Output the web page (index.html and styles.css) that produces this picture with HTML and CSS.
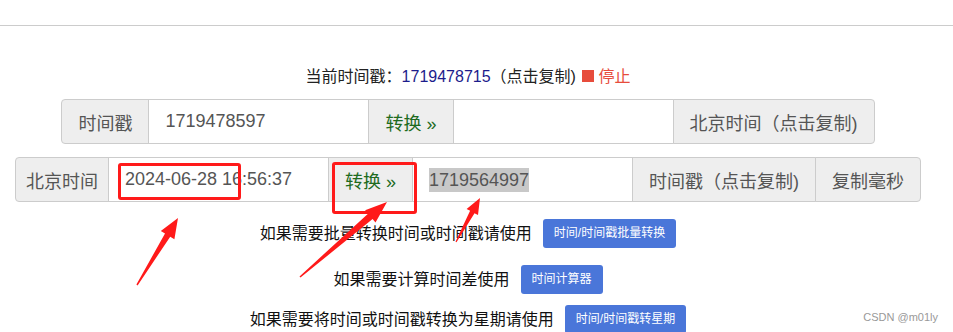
FILE: index.html
```html
<!DOCTYPE html>
<html lang="zh-CN">
<head>
    <meta charset="UTF-8">
    <meta name="viewport" content="width=device-width, initial-scale=1.0">
    <title>时间戳转换</title>
    <link rel="stylesheet" href="styles.css">
</head>
<body>
    <div class="topbar"></div>

    <div class="page">
        <p class="now">当前时间戳：<span class="now-value">1719478715</span>（点击复制)<span class="stop-box"></span> <span class="stop">停止</span></p>

        <div class="group">
            <span class="addon">时间戳</span>
            <div class="field">1719478597</div>
            <span class="btn">转换 »</span>
            <div class="field"></div>
            <span class="addon">北京时间（点击复制)</span>
        </div>

        <div class="group group-second">
            <span class="addon addon-narrow">北京时间</span>
            <div class="field">2024-06-28 16:56:37</div>
            <span class="btn">转换 »</span>
            <div class="field"><span class="picked">1719564997</span></div>
            <span class="addon">时间戳（点击复制)</span>
            <span class="addon">复制毫秒</span>
        </div>

        <p class="tip tip-batch">如果需要批量转换时间或时间戳请使用<a href="#" class="link-btn">时间/时间戳批量转换</a></p>
        <p class="tip tip-diff">如果需要计算时间差使用<a href="#" class="link-btn">时间计算器</a></p>
        <p class="tip tip-week">如果需要将时间或时间戳转换为星期请使用<a href="#" class="link-btn">时间/时间戳转星期</a></p>
    </div>

    <!-- screenshot annotations -->
    <div class="mark mark-date"></div>
    <div class="mark mark-btn"></div>
    <svg class="arrows" width="953" height="332" viewBox="0 0 953 332">
        <polygon points="137.6,285.4 170.2,236.7 174.4,239.3 178,218 160.8,230.9 165.0,233.5 136.4,284.6"/>
        <polygon points="300.5,277.6 372.6,219.0 375.5,222.5 387,202 365.1,210.3 368.0,213.8 299.5,276.4"/>
        <polygon points="456.5,242.3 474.5,213.2 478.0,215.1 480,198 466.6,208.9 470.1,210.8 455.5,241.7"/>
    </svg>
    <div class="watermark">CSDN @m01ly</div>
</body>
</html>
```

FILE: styles.css
```css
body {
    margin: 0;
    font-family: "Liberation Sans", "Noto Sans CJK SC", sans-serif;
    color: #333;
    background: #fff;
}
.topbar {
    height: 25px;
    border-bottom: 1px solid #ccc;
}
.page {
    width: 936px;
    text-align: center;
}
.now {
    margin: 39px 0 0;
    font-size: 16px;
    line-height: 24px;
    color: #222;
}
.now-value {
    color: #1c1c8c;
}
.stop-box {
    display: inline-block;
    width: 12px;
    height: 12px;
    margin-left: 6px;
    background: #e74c3c;
}
.stop {
    color: #e74c3c;
}
.group {
    display: inline-flex;
    margin-top: 10px;
    height: 45px;
    font-size: 18px;
    color: #555;
}
.group-second {
    margin-top: 13px;
}
.group > * {
    display: flex;
    align-items: center;
    box-sizing: border-box;
    border: 1px solid #ccc;
    margin-left: -1px;
    white-space: nowrap;
}
.group > :first-child {
    margin-left: 0;
    border-radius: 4px 0 0 4px;
}
.group > :last-child {
    border-radius: 0 4px 4px 0;
}
.addon {
    padding: 0 16px;
    background: #eee;
}
.addon-narrow {
    padding: 0 10px;
}
.field {
    width: 221px;
    padding: 0 16px;
    background: #fff;
}
.btn {
    padding: 0 16px;
    background: #eee;
    color: #1e6b1e;
}
.picked {
    background: #c8c8c8;
    line-height: 24px;
}
.tip {
    margin: 17px 0 0;
    font-size: 16px;
    line-height: 29px;
    color: #111;
}
.tip-week {
    margin-top: 11px;
}
.link-btn {
    display: inline-block;
    vertical-align: top;
    margin-left: 11px;
    padding: 0 11px;
    height: 29px;
    line-height: 29px;
    font-size: 12px;
    color: #fff;
    background: #4a76d9;
    border-radius: 3px;
    text-decoration: none;
}
.mark {
    position: absolute;
    border: 3px solid #ff1a1a;
    border-radius: 3px;
    box-sizing: border-box;
}
.mark-date {
    left: 118px;
    top: 163px;
    width: 123px;
    height: 37px;
}
.mark-btn {
    left: 332px;
    top: 162px;
    width: 85px;
    height: 52px;
}
.arrows {
    position: absolute;
    left: 0;
    top: 0;
    pointer-events: none;
}
.arrows polygon {
    fill: #ff1a1a;
}
.watermark {
    position: absolute;
    right: 15px;
    top: 311px;
    font-size: 11px;
    color: #999;
}
```
